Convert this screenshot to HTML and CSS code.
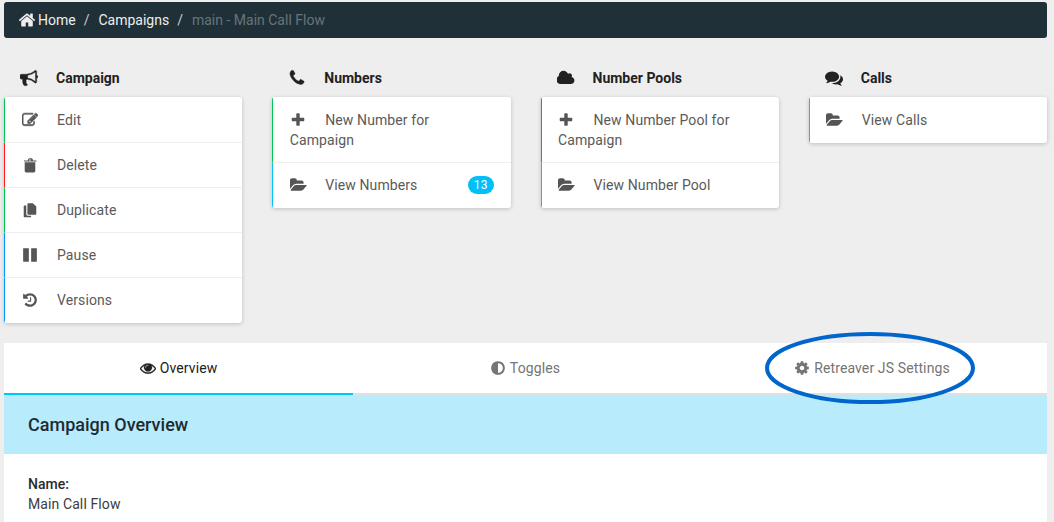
FILE: index.html
```html
<!DOCTYPE html>
<html lang="en">
<head>
<meta charset="utf-8">
<title>Campaign</title>
<link rel="stylesheet" href="styles.css">
</head>
<body>
<svg class="defs" xmlns="http://www.w3.org/2000/svg">
  <symbol id="i-home" viewBox="0 0 1792 1792"><path d="M1472 992v480q0 26-19 45t-45 19h-384v-384h-256v384h-384q-26 0-45-19t-19-45v-480q0-1 .5-3t.5-3l575-474 575 474q1 2 1 6zm223-69l-62 74q-8 9-21 11h-3q-13 0-21-7l-692-577-692 577q-12 8-24 7-13-2-21-11l-62-74q-8-10-7-23.5t11-21.5l719-599q32-26 76-26t76 26l244 204v-195q0-14 9-23t23-9h192q14 0 23 9t9 23v408l219 182q10 8 11 21.5t-7 23.5z"/></symbol>
  <symbol id="i-bullhorn" viewBox="0 0 1792 1792"><path class="heavy" d="M1664 640q53 0 90.5 37.5t37.5 90.5-37.5 90.5-90.5 37.5v384q0 52-38 90t-90 38q-417-347-812-380-58 19-91 66t-31 100.5 40 92.5q-20 33-23 65.5t6 58 33.5 55 48 50 61.5 50.5q-29 58-111.5 83t-168.5 11.5-132-55.5q-7-23-29.5-87.5t-32-94.5-23-89-15-101 3.5-98.5 22-110.5h-122q-66 0-113-47t-47-113v-192q0-66 47-113t113-47h480q435 0 896-384 52 0 90 38t38 90v384zm-128 604v-954q-394 302-768 343v270q377 42 768 341z"/></symbol>
  <symbol id="i-phone" viewBox="0 0 1792 1792"><path class="heavy" d="M1600 1240q0 27-10 70.5t-21 68.5q-21 50-122 106-94 51-186 51-27 0-53-3.5t-57.5-12.5-47-14.5-55.5-20.5-49-18q-98-35-175-83-127-79-264-216t-216-264q-48-77-83-175-3-9-18-49t-20.5-55.5-14.5-47-12.5-57.5-3.5-53q0-92 51-186 56-101 106-122 25-11 68.5-21t70.5-10q14 0 21 3 18 6 53 76 11 19 30 54t35 63.5 31 53.5q3 4 17.5 25t21.5 35.5 7 28.5q0 20-28.5 50t-62 55-62 53-28.5 46q0 9 5 22.5t8.5 20.5 14 24 11.5 19q76 137 174 235t235 174q2 1 19 11.5t24 14 20.5 8.5 22.5 5q18 0 46-28.5t53-62 55-62 50-28.5q14 0 28.5 7t35.5 21.5 25 17.5q25 15 53.5 31t63.5 35 54 30q70 35 76 53 3 7 3 21z"/></symbol>
  <symbol id="i-cloud" viewBox="0 0 1920 1792"><path d="M1856 1152q0 159-112.5 271.5t-271.5 112.5h-1088q-185 0-316.5-131.5t-131.5-316.5q0-132 71-241.5t187-163.5q-2-28-2-43 0-212 150-362t362-150q158 0 286.5 88t187.5 230q70-62 166-62 106 0 181 75t75 181q0 75-41 138 129 30 213 134.5t84 239.5z"/></symbol>
  <symbol id="i-comments" viewBox="0 0 1792 1792"><path d="M1408 768q0 139-94 257t-256.5 186.5-353.5 68.5q-86 0-176-16-124 88-278 128-36 9-86 16h-3q-11 0-20.5-8t-11.5-21q-1-3-1-6.5t.5-6.5 2-6l2.5-5 3.5-5.5 4-5 4.5-5 4-4.5q5-6 23-25t26-29.5 22.5-29 25-38.5 20.5-44q-124-72-195-177t-71-224q0-139 94-257t256.5-186.5 353.5-68.5 353.5 68.5 256.5 186.5 94 257zm384 256q0 120-71 224.5t-195 176.5q10 24 20.5 44t25 38.5 22.5 29 26 29.5 23 25q1 1 4 4.5t4.5 5 4 5 3.5 5.5l2.5 5 2 6 .5 6.5-1 6.5q-3 14-13 22t-22 7q-50-7-86-16-154-40-278-128-90 16-176 16-271 0-472-132 58 4 88 4 161 0 309-45t264-129q125-92 192-212t67-254q0-77-23-152 129 71 204 178t75 230z"/></symbol>
  <symbol id="i-edit" viewBox="0 0 1792 1792"><path class="heavier" d="M888 1184l116-116-152-152-116 116v56h96v96h56zm440-720q-16-16-33 1l-350 350q-17 17-1 33t33-1l350-350q17-17 1-33zm80 594v190q0 119-84.500 203.500t-203.500 84.500h-832q-119 0-203.500-84.500t-84.500-203.500v-832q0-119 84.500-203.500t203.500-84.500h832q63 0 117 25 15 7 18 23 3 17-9 29l-49 49q-14 14-32 8-23-6-45-6h-832q-66 0-113 47t-47 113v832q0 66 47 113t113 47h832q66 0 113-47t47-113v-126q0-13 9-22l64-64q15-15 35-7t20 29zm-96-738l288 288-672 672h-288v-288zm444 132l-92 92-288-288 92-92q28-28 68-28t68 28l152 152q28 28 28 68t-28 68z"/></symbol>
  <symbol id="i-trash" viewBox="0 0 1792 1792"><path d="M304 576h1184v1000q0 66-47 113t-113 47h-864q-66 0-113-47t-47-113zm336-192l70-167q15-37 54-63t79-26h206q40 0 79 26t54 63l70 167h341q14 0 23 9t9 23v64q0 14-9 23t-23 9h-1344q-14 0-23-9t-9-23v-64q0-14 9-23t23-9zm138 0h236l-42-102q-7-9-17-11h-118q-10 2-17 11z"/></symbol>
  <symbol id="i-copy" viewBox="0 0 1792 1792"><path d="M704 128h512l384 384v832q0 40-28 68t-68 28h-800q-40 0-68-28t-28-68v-1120q0-40 28-68t68-28zM192 480q0-40 28-68t68-28h192v992q0 66 47 113t113 47h384v80q0 40-28 68t-68 28h-640q-40 0-68-28t-28-68z"/></symbol>
  <symbol id="i-pause" viewBox="0 0 1792 1792"><path d="M1664 192v1408q0 26-19 45t-45 19h-512q-26 0-45-19t-19-45v-1408q0-26 19-45t45-19h512q26 0 45 19t19 45zm-896 0v1408q0 26-19 45t-45 19h-512q-26 0-45-19t-19-45v-1408q0-26 19-45t45-19h512q26 0 45 19t19 45z"/></symbol>
  <symbol id="i-history" viewBox="0 0 1792 1792"><path d="M1664 896q0 156-61 298t-164 245-245 164-298 61q-172 0-327-72.500t-264-204.500q-7-10-6.500-22.500t8.500-20.500l137-138q10-9 25-9 16 2 23 12 73 95 179 147t225 52q104 0 198.500-40.500t163.500-109.500 109.500-163.500 40.500-198.500-40.500-198.500-109.500-163.500-163.500-109.500-198.500-40.500q-98 0-188 35.500t-160 101.500l137 138q31 30 14 69-17 40-59 40h-448q-26 0-45-19t-19-45v-448q0-42 40-59 39-17 69 14l130 129q107-101 244.500-156.500t284.500-55.500q156 0 298 61t245 164 164 245 61 298zm-640-288v448q0 14-9 23t-23 9h-320q-14 0-23-9t-9-23v-64q0-14 9-23t23-9h224v-352q0-14 9-23t23-9h64q14 0 23 9t9 23z"/></symbol>
  <symbol id="i-plus" viewBox="0 0 1792 1792"><path d="M1600 736v192q0 40-28 68t-68 28h-416v416q0 40-28 68t-68 28h-192q-40 0-68-28t-28-68v-416h-416q-40 0-68-28t-28-68v-192q0-40 28-68t68-28h416v-416q0-40 28-68t68-28h192q40 0 68 28t28 68v416h416q40 0 68 28t28 68z"/></symbol>
  <symbol id="i-folder" viewBox="0 0 1920 1792"><path d="M1879 952q0 31-31 66l-336 396q-43 51-120.500 86.500t-143.500 35.500h-1088q-34 0-60.500-13t-26.500-43q0-31 31-66l336-396q43-51 120.500-86.500t143.500-35.500h1088q34 0 60.500 13t26.500 43zm-343-344v160h-832q-94 0-197 47.500t-164 119.500l-337 396-5 6q0-4-.5-12.500t-.5-12.500v-960q0-92 66-158t158-66h320q92 0 158 66t66 158v32h544q92 0 158 66t66 158z"/></symbol>
  <symbol id="i-eye" viewBox="0 0 1792 1792"><path class="heavy" d="M1664 960q-152-236-381-353 61 104 61 225 0 185-131.500 316.500t-316.500 131.500-316.500-131.500-131.500-316.500q0-121 61-225-229 117-381 353 133 205 333.500 326.500t434.500 121.500 434.500-121.500 333.500-326.500zm-720-384q0-20-14-34t-34-14q-125 0-214.500 89.500t-89.500 214.500q0 20 14 34t34 14 34-14 14-34q0-86 61-147t147-61q20 0 34-14t14-34zm848 384q0 34-20 69-140 230-376.500 368.500t-499.500 138.500-499.500-139-376.500-368q-20-35-20-69t20-69q140-229 376.500-368t499.500-139 499.500 139 376.500 368q20 35 20 69z"/></symbol>
  <symbol id="i-adjust" viewBox="0 0 1792 1792"><path transform="matrix(-1 0 0 1 1792 0)" d="M896 1440v-1088q-148 0-273 73t-198 198-73 273 73 273 198 198 273 73zm768-544q0 209-103 385.500t-279.500 279.500-385.500 103-385.500-103-279.500-279.500-103-385.500 103-385.500 279.500-279.500 385.500-103 385.500 103 279.500 279.500 103 385.500z"/></symbol>
  <symbol id="i-cog" viewBox="0 0 1792 1792"><path d="M1152 896q0-106-75-181t-181-75-181 75-75 181 75 181 181 75 181-75 75-181zm512-109v222q0 12-8 23t-20 13l-185 28q-19 54-39 91 35 50 107 138 10 12 10 25t-9 23q-27 37-99 108t-94 71q-12 0-26-9l-138-108q-44 23-91 38-16 136-29 186-7 28-36 28h-222q-14 0-24.500-8.500t-11.500-21.500l-28-184q-49-16-90-37l-141 107q-10 9-25 9-14 0-25-11-126-114-165-168-7-10-7-23 0-12 8-23 15-21 51-66.500t54-70.500q-27-50-41-99l-183-27q-13-2-21-12.500t-8-23.500v-222q0-12 8-23t19-13l186-28q14-46 39-92-40-57-107-138-10-12-10-24 0-10 9-23 26-36 98.500-107.500t94.500-71.500q13 0 26 10l138 107q44-23 91-38 16-136 29-186 7-28 36-28h222q14 0 24.500 8.500t11.500 21.500l28 184q49 16 90 37l142-107q9-9 24-9 13 0 25 10 129 119 165 170 7 8 7 22 0 12-8 23-15 21-51 66.500t-54 70.500q26 50 41 98l183 28q13 2 21 12.500t8 23.500z"/></symbol>
</svg>

<nav class="crumbs">
  <svg class="crumb-icon"><use href="#i-home"/></svg>
  <a class="crumb">Home</a>
  <span class="sep">/</span>
  <a class="crumb">Campaigns</a>
  <span class="sep">/</span>
  <span class="crumb-active">main - Main Call Flow</span>
</nav>

<main class="grid">
  <section class="col">
    <h2 class="col-title"><svg class="title-icon"><use href="#i-bullhorn"/></svg>Campaign</h2>
    <ul class="card">
      <li class="item green"><svg class="icon"><use href="#i-edit"/></svg>Edit</li>
      <li class="item red"><svg class="icon"><use href="#i-trash"/></svg>Delete</li>
      <li class="item green"><svg class="icon"><use href="#i-copy"/></svg>Duplicate</li>
      <li class="item blue"><svg class="icon"><use href="#i-pause"/></svg>Pause</li>
      <li class="item blue"><svg class="icon"><use href="#i-history"/></svg>Versions</li>
    </ul>
  </section>
  <section class="col">
    <h2 class="col-title"><svg class="title-icon"><use href="#i-phone"/></svg>Numbers</h2>
    <ul class="card">
      <li class="item green"><svg class="icon"><use href="#i-plus"/></svg>New Number for Campaign</li>
      <li class="item cyan"><svg class="icon wide"><use href="#i-folder"/></svg>View Numbers<span class="badge">13</span></li>
    </ul>
  </section>
  <section class="col">
    <h2 class="col-title"><svg class="title-icon"><use href="#i-cloud"/></svg>Number Pools</h2>
    <ul class="card">
      <li class="item dark-green"><svg class="icon"><use href="#i-plus"/></svg>New Number Pool for Campaign</li>
      <li class="item cyan"><svg class="icon wide"><use href="#i-folder"/></svg>View Number Pool</li>
    </ul>
  </section>
  <section class="col">
    <h2 class="col-title"><svg class="title-icon"><use href="#i-comments"/></svg>Calls</h2>
    <ul class="card">
      <li class="item cyan"><svg class="icon wide"><use href="#i-folder"/></svg>View Calls</li>
    </ul>
  </section>
</main>

<section class="panel">
  <div class="tabs">
    <div class="tab active"><svg class="tab-icon"><use href="#i-eye"/></svg>Overview</div>
    <div class="tab"><svg class="tab-icon"><use href="#i-adjust"/></svg>Toggles</div>
    <div class="tab"><svg class="tab-icon"><use href="#i-cog"/></svg>Retreaver JS Settings</div>
  </div>
  <h1 class="panel-head">Campaign Overview</h1>
  <div class="panel-body">
    <div class="field-label">Name:</div>
    <div class="field-value">Main Call Flow</div>
  </div>
</section>

<svg class="callout" viewBox="0 0 214 76" xmlns="http://www.w3.org/2000/svg"><ellipse cx="107" cy="38" rx="103" ry="34"/></svg>
</body>
</html>
```

FILE: styles.css
```css
* { box-sizing: border-box; }
html, body { height: 100%; }
body {
  margin: 0;
  padding: 2px 7px 0 4px;
  background: #eeeeee;
  font-family: Roboto, "Liberation Sans", sans-serif;
  font-size: 14px;
  line-height: 20px;
  color: #333;
  overflow: hidden;
  position: relative;
}
.defs { display: none; }
svg { fill: currentColor; }
.heavy { stroke: currentColor; stroke-width: 36; }
.heavier { stroke: currentColor; stroke-width: 70; }

.crumbs {
  display: flex;
  align-items: center;
  height: 36px;
  padding-left: 14px;
  border-radius: 3px;
  background: #1f3038;
  color: #eeeeee;
}
.crumb-icon { width: 18px; height: 18px; margin-right: 2px; flex: none; }
.sep { padding: 0 9px 0 8px; color: #ccc; }
.crumb-active { color: #66757b; }

.grid {
  display: grid;
  grid-template-columns: repeat(4, 1fr);
  column-gap: 30px;
  margin-top: 27px;
  height: 278px;
}
.col-title {
  display: flex;
  align-items: center;
  height: 26px;
  margin: 0 0 6px;
  padding-left: 16px;
  font-size: 14px;
  font-weight: 700;
  line-height: 26px;
  color: #212121;
}
.title-icon { width: 18px; height: 18px; margin-right: 18px; flex: none; }
.card {
  list-style: none;
  margin: 0;
  padding: 1px 0 0;
  background: #fff;
  border-radius: 3px;
  box-shadow: 0 1px 4px rgba(0,0,0,0.2);
  overflow: hidden;
}
.item {
  padding: 12px 16px 12px 16.5px;
  border-left: 1px solid #ccc;
  border-bottom: 1px solid #eeeeee;
  color: #5a5a5a;
  letter-spacing: 0.1px;
}
.item:last-child { border-bottom: 0; padding-bottom: 13px; }
.green { border-left-color: #00c853; }
.dark-green { border-left-color: #1aa64b; }
.red { border-left-color: #ff1a1a; }
.blue { border-left-color: #0a96ff; }
.cyan { border-left-color: #00c4f5; }
.icon {
  display: inline-block;
  width: 16px;
  height: 16px;
  margin-right: 19.5px;
  vertical-align: -3px;
  color: #555;
}
.icon.wide { width: 17px; margin-right: 18.5px; }
.badge {
  float: right;
  height: 18px;
  margin: 1px 1px 0 0;
  padding: 0 6px;
  border-radius: 9px;
  background: #00c0f7;
  color: #fff;
  font-size: 12px;
  line-height: 18px;
}

.panel {
  background: #fff;
  min-height: 200px;
}
.tabs { display: grid; grid-template-columns: 349fr 344fr 350fr; }
.tab {
  display: flex;
  align-items: center;
  justify-content: center;
  height: 52px;
  border-bottom: 2px solid #e0e0e0;
  color: #757575;
  letter-spacing: 0.12px;
}
.tab.active { color: #212121; border-bottom-color: #00c7f9; }
.tab-icon { width: 16px; height: 16px; margin-right: 4px; flex: none; }
.panel-head {
  margin: 0;
  height: 59px;
  padding-left: 24px;
  background: #b8ecfd;
  color: #1d2b31;
  font-size: 18px;
  font-weight: 500;
  line-height: 59px;
}
.panel-body { padding: 20px 24px; }
.field-label { font-weight: 500; color: #2a2a2a; }
.field-value { color: #3c3c3c; letter-spacing: 0.1px; }

.callout {
  position: absolute;
  left: 763px;
  top: 330px;
  width: 214px;
  height: 76px;
  fill: none;
  stroke: #0066cc;
  stroke-width: 4;
}
```
